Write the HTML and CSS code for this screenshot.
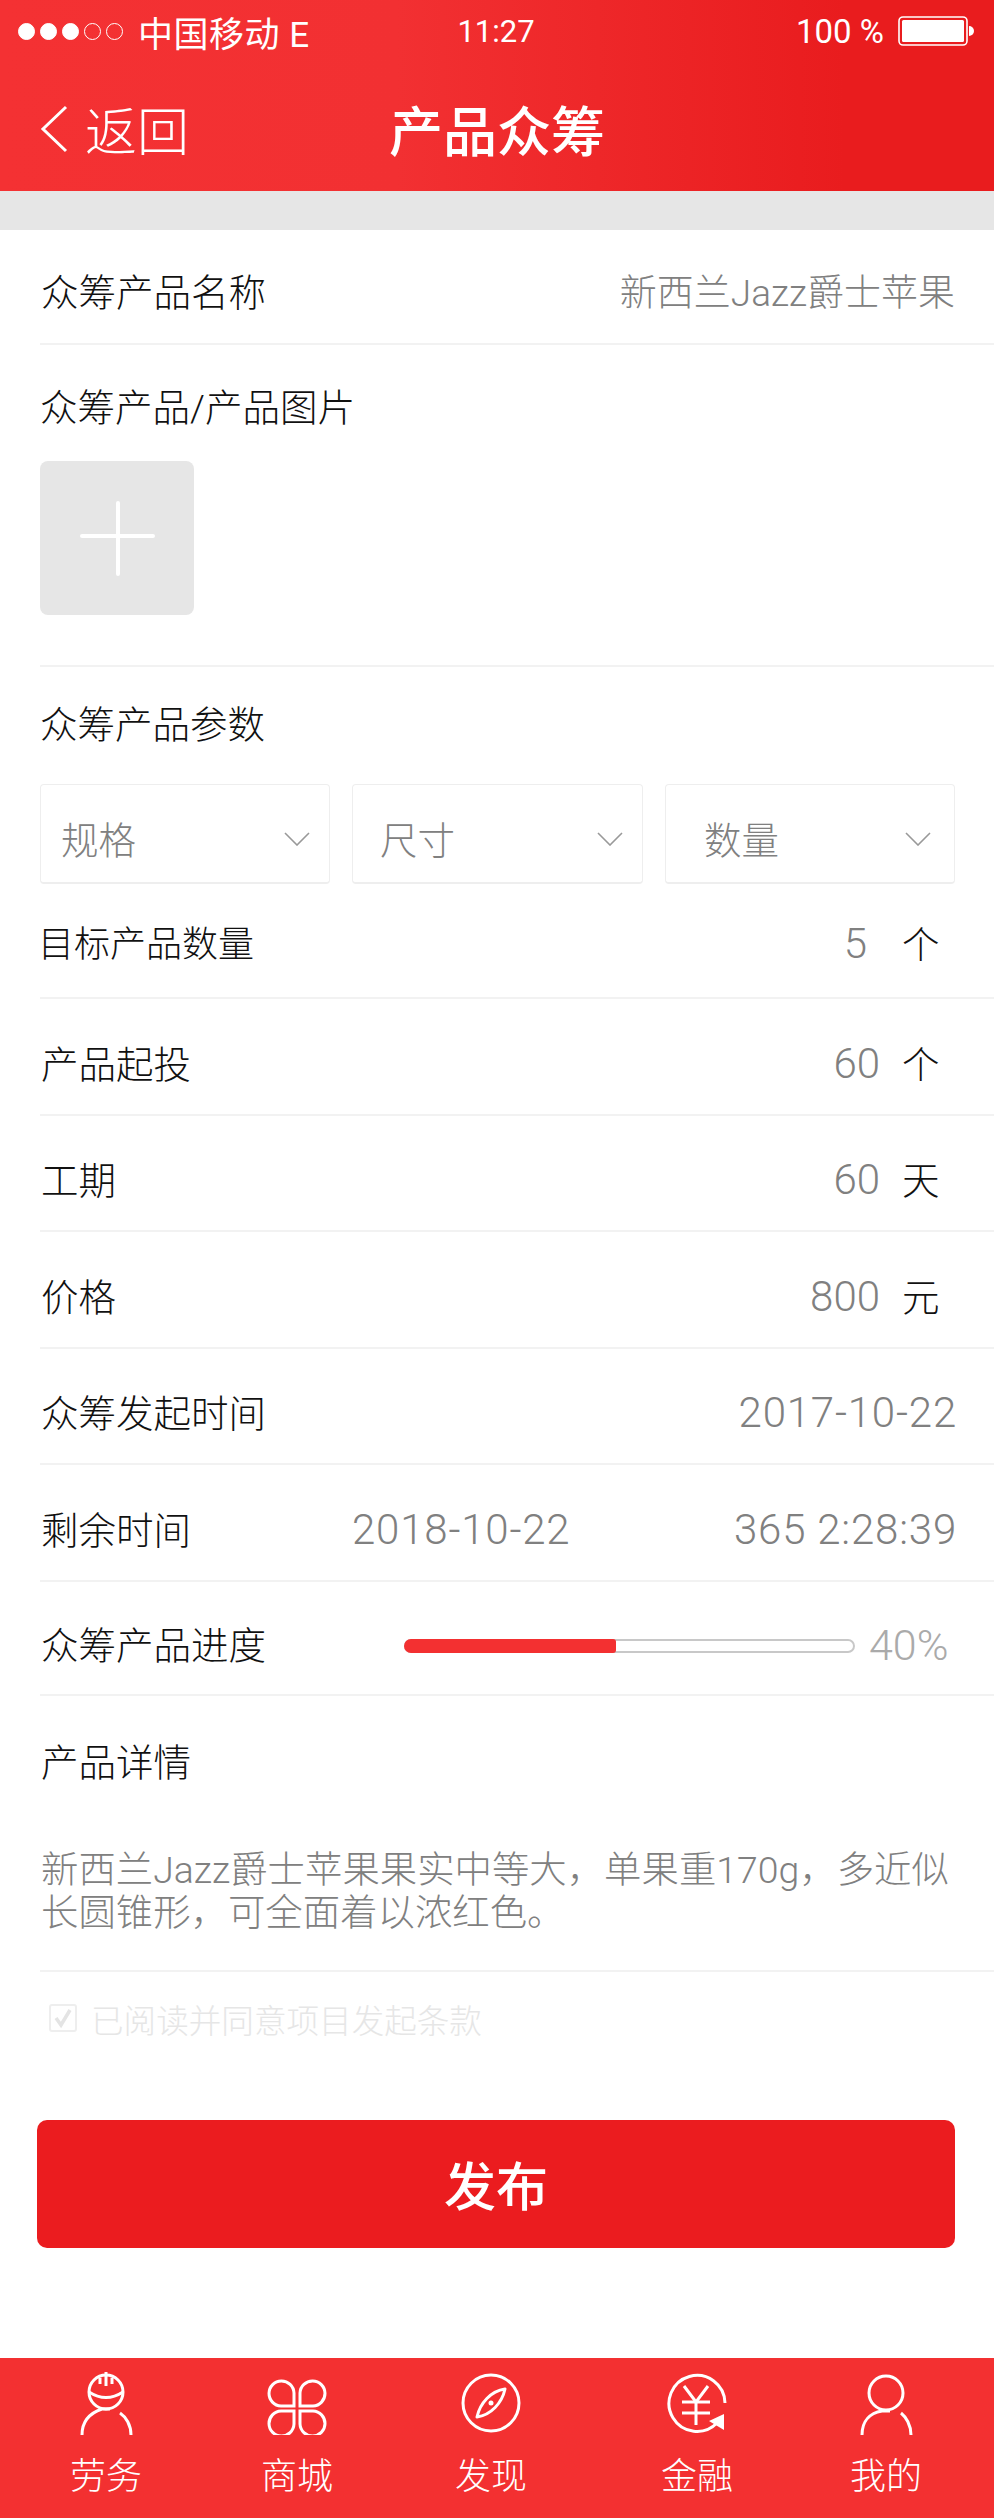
FILE: index.html
```html
<!DOCTYPE html>
<html lang="zh-CN">
<head>
    <meta charset="UTF-8">
    <meta name="viewport" content="width=device-width, initial-scale=1.0">
    <title>产品众筹</title>
    <link rel="stylesheet" href="styles.css">
</head>
<body>
    <div class="page">
        <header class="header">
            <div class="status">
                <div class="carrier">
                    <span class="signal">
                        <i class="dot on"></i><i class="dot on"></i><i class="dot on"></i><i class="dot"></i><i class="dot"></i>
                    </span>
                    <span>中国移动 E</span>
                </div>
                <div class="time">11:27</div>
                <div class="power">
                    <span>100 %</span>
                    <svg class="battery" width="76" height="30" viewBox="0 0 76 30">
                        <rect x="1" y="1" width="68" height="28" rx="4" fill="none" stroke="#fff" stroke-width="1.6"/>
                        <rect x="4" y="4" width="62" height="22" rx="1.5" fill="#fff"/>
                        <path d="M71 10a5 5 0 0 1 0 10z" fill="#fff"/>
                    </svg>
                </div>
            </div>
            <div class="nav">
                <div class="back">
                    <svg width="28" height="48" viewBox="0 0 28 48">
                        <path d="M26 2 L3 24 L26 46" fill="none" stroke="#fff" stroke-width="3"/>
                    </svg>
                    <span>返回</span>
                </div>
                <h1>产品众筹</h1>
                <div></div>
            </div>
        </header>

        <div class="gap"></div>

        <div class="row row-name">
            <span class="label">众筹产品名称</span>
            <span class="value">新西兰Jazz爵士苹果</span>
        </div>

        <div class="block block-upload">
            <div class="label">众筹产品/产品图片</div>
            <div class="upload"><i class="plus-h"></i><i class="plus-v"></i></div>
        </div>

        <div class="params">
            <div class="label">众筹产品参数</div>
            <div class="selects">
                <div class="select sel-a">
                    <span>规格</span>
                    <svg width="26" height="14" viewBox="0 0 26 14"><path d="M1 1 L13 13 L25 1" fill="none" stroke="#999" stroke-width="1.6"/></svg>
                </div>
                <div class="select sel-b">
                    <span>尺寸</span>
                    <svg width="26" height="14" viewBox="0 0 26 14"><path d="M1 1 L13 13 L25 1" fill="none" stroke="#999" stroke-width="1.6"/></svg>
                </div>
                <div class="select sel-c">
                    <span>数量</span>
                    <svg width="26" height="14" viewBox="0 0 26 14"><path d="M1 1 L13 13 L25 1" fill="none" stroke="#999" stroke-width="1.6"/></svg>
                </div>
            </div>
        </div>

        <div class="row row-first">
            <span class="label label-flush">目标产品数量</span>
            <span class="num num-single">5</span><span class="unit">个</span>
        </div>
        <div class="row">
            <span class="label">产品起投</span>
            <span class="num">60</span><span class="unit">个</span>
        </div>
        <div class="row">
            <span class="label">工期</span>
            <span class="num">60</span><span class="unit">天</span>
        </div>
        <div class="row">
            <span class="label">价格</span>
            <span class="num">800</span><span class="unit">元</span>
        </div>
        <div class="row">
            <span class="label">众筹发起时间</span>
            <span class="num num-end">2017-10-22</span>
        </div>
        <div class="row">
            <span class="label label-wide">剩余时间</span>
            <span class="date">2018-10-22</span>
            <span class="num num-end">365 2:28:39</span>
        </div>
        <div class="row row-short">
            <span class="label label-wide">众筹产品进度</span>
            <div class="track"><div class="fill" style="width: 47.500%"></div></div>
            <span class="percent">40%</span>
        </div>

        <div class="details">
            <div class="label">产品详情</div>
            <p>新西兰Jazz爵士苹果果实中等大，单果重170g，多近似<br>长圆锥形，可全面着以浓红色。</p>
        </div>

        <div class="agree">
            <svg width="28" height="28" viewBox="0 0 28 28">
                <rect x="1" y="1" width="26" height="26" rx="2" fill="none" stroke="#eee" stroke-width="2"/>
                <path d="M7 14 L12 21 L21 6" fill="none" stroke="#e4e4e4" stroke-width="3.5"/>
            </svg>
            <span>已阅读并同意项目发起条款</span>
        </div>

        <div class="submit">发布</div>

        <nav class="tabs">
            <div class="tab">
                <svg width="60" height="64" viewBox="0 0 60 64">
                    <g fill="none" stroke="#fff" stroke-width="3">
                        <circle cx="30" cy="21" r="17"/>
                        <path d="M13 21 Q30 32 47 21"/>
                        <path d="M30 1 V15 M24 7 V13 M36 7 V13"/>
                        <path d="M6 64 C6 50 14 42 26 38 H34"/>
                        <path d="M44 42 C50 46 55 54 55 64"/>
                    </g>
                </svg>
                <span>劳务</span>
            </div>
            <div class="tab">
                <svg width="60" height="64" viewBox="0 0 60 64">
                    <g fill="none" stroke="#fff" stroke-width="3">
                        <path d="M27 35 H14 A12.500 12.500 0 1 1 27 22 Z"/>
                        <path d="M33 35 H46 A12.500 12.500 0 1 0 33 22 Z"/>
                        <path d="M27 40 H14 A12.500 12.500 0 1 0 27 53 Z"/>
                        <path d="M33 40 H46 A12.500 12.500 0 1 1 33 53 Z"/>
                    </g>
                </svg>
                <span>商城</span>
            </div>
            <div class="tab">
                <svg width="60" height="64" viewBox="0 0 60 64">
                    <circle cx="30" cy="32" r="28" fill="none" stroke="#fff" stroke-width="3"/>
                    <path d="M44 18 C30 20 19 32 16 46 C30 44 41 32 44 18 Z" fill="none" stroke="#fff" stroke-width="3" stroke-linejoin="round"/>
                    <circle cx="30" cy="32" r="2.500" fill="#fff"/>
                </svg>
                <span>发现</span>
            </div>
            <div class="tab">
                <svg width="60" height="64" viewBox="0 0 60 64">
                    <g fill="none" stroke="#fff" stroke-width="3">
                        <path d="M58 32 A28 28 0 1 0 50 52"/>
                        <path d="M17 15 L29 31 L41 15"/>
                        <path d="M15 31 H43 M15 42 H43 M29 31 V54"/>
                    </g>
                    <path d="M42 50 L57 43 L57 59 Z" fill="#fff"/>
                </svg>
                <span>金融</span>
            </div>
            <div class="tab">
                <svg width="60" height="64" viewBox="0 0 60 64">
                    <g fill="none" stroke="#fff" stroke-width="3">
                        <circle cx="30" cy="22" r="17"/>
                        <path d="M6 64 C6 50 14 42 26 40 H34"/>
                        <path d="M45 42 C50 46 55 54 55 64"/>
                    </g>
                </svg>
                <span>我的</span>
            </div>
        </nav>
    </div>
</body>
</html>
```

FILE: styles.css
```css
* {
    box-sizing: border-box;
}
body {
    margin: 0;
    background: #fff;
    font-family: Roboto, "Noto Sans CJK SC", sans-serif;
    font-weight: 300;
    color: #111;
}
.page {
    width: 994px;
    height: 2518px;
    display: flex;
    flex-direction: column;
    overflow: hidden;
}

/* header */
.header {
    height: 191px;
    background: linear-gradient(90deg, #f43133 0%, #f23032 40%, #e91c1e 85%);
    color: #fff;
}
.status {
    height: 62px;
    display: grid;
    grid-template-columns: 1fr auto 1fr;
    align-items: center;
    padding: 0 20px 0 18px;
    font-size: 33px;
}
.carrier {
    display: flex;
    align-items: center;
    gap: 15px;
    font-size: 35px;
    font-weight: 400;
    letter-spacing: 0.5px;
}
.signal {
    display: flex;
    gap: 5px;
}
.dot {
    width: 17px;
    height: 17px;
    border-radius: 50%;
    border: 1.5px solid #fff;
}
.dot.on {
    background: #fff;
}
.time {
    font-size: 31px;
    font-weight: 400;
}
.power {
    display: flex;
    justify-content: flex-end;
    align-items: center;
    gap: 14px;
    font-size: 33px;
    font-weight: 400;
}
.nav {
    height: 129px;
    display: grid;
    grid-template-columns: 1fr auto 1fr;
    align-items: center;
    padding: 4px 40px 0 40px;
}
.back {
    display: flex;
    align-items: center;
    gap: 17px;
    font-size: 52px;
}
.nav h1 {
    margin: 0;
    font-size: 54px;
    font-weight: 500;
}
.gap {
    height: 39px;
    background: #e6e6e6;
}

/* form rows */
.label {
    font-size: 37.500px;
    color: #111;
}
.label-flush {
    margin-left: -3px;
    font-size: 36px;
}
.label-wide {
    width: 364px;
    flex-shrink: 0;
}
.row {
    height: 116.500px;
    margin-left: 40px;
    padding: 10px 39px 0 1px;
    display: flex;
    align-items: center;
    border-bottom: 2px solid #f2f2f2;
}
.row-name {
    height: 115px;
    padding-top: 6px;
}
.row-first {
    height: 116px;
    padding-top: 2px;
}
.row-short {
    height: 114px;
    padding-top: 10px;
}
.value {
    margin-left: auto;
    font-size: 37px;
    color: #808080;
}
.num {
    margin-left: auto;
    margin-top: 4px;
    font-size: 42px;
    color: #808080;
}
.num-single {
    margin-right: 13px;
}
.num-end {
    margin-right: -2px;
    letter-spacing: 0.800px;
}
.unit {
    width: 53px;
    margin-right: 22px;
    padding-left: 22px;
    font-size: 37.500px;
    color: #111;
    flex-shrink: 0;
}
.date {
    margin-left: -53px;
    margin-top: 4px;
    font-size: 42px;
    color: #808080;
    letter-spacing: 0.800px;
    white-space: nowrap;
}
.block-upload {
    height: 322px;
    margin-left: 40px;
    padding-top: 32px;
    border-bottom: 2px solid #f2f2f2;
}
.upload {
    width: 154px;
    height: 154px;
    margin-top: 29px;
    background: #e6e6e6;
    border-radius: 8px;
    position: relative;
}
.plus-h,
.plus-v {
    position: absolute;
    background: #fff;
    border-radius: 2px;
}
.plus-h {
    left: 40px;
    top: 73px;
    width: 75px;
    height: 4px;
}
.plus-v {
    left: 76px;
    top: 40px;
    width: 4px;
    height: 75px;
}
.params {
    height: 216px;
    padding: 27px 39px 0 40px;
}
.selects {
    display: grid;
    grid-template-columns: 290px 291px 290px;
    gap: 22px;
    margin-top: 35px;
}
.select {
    height: 100px;
    display: flex;
    align-items: center;
    justify-content: space-between;
    border: 1px solid #eee;
    border-bottom: 2px solid #eee;
    border-radius: 4px;
    padding: 8px 19px 0 20px;
    font-size: 37.500px;
    color: #808080;
}
.select svg {
    margin-top: 2px;
}
.sel-b {
    padding-left: 27px;
}
.sel-c {
    padding: 8px 23px 0 38px;
}
.track {
    width: 451px;
    height: 14px;
    margin-top: 6px;
    margin-left: -1px;
    border: 2px solid #c8c8c8;
    border-radius: 7px;
    background: #fff;
    overflow: visible;
}
.fill {
    height: 14px;
    margin: -2px 0 0 -2px;
    background: #f33031;
    border-radius: 7px 3px 3px 7px;
}
.percent {
    margin-left: 14px;
    margin-top: 4px;
    font-size: 43px;
    color: #aaa;
}
.details {
    height: 276px;
    margin-left: 40px;
    padding: 36px 0 0 1px;
    border-bottom: 2px solid #f2f2f2;
}
.details p {
    margin: 62px 0 0;
    font-size: 37.400px;
    line-height: 43px;
    color: #808080;
}
.agree {
    height: 97px;
    padding: 0 0 4px 49px;
    display: flex;
    align-items: center;
    gap: 14px;
    font-size: 32.600px;
    color: #e6e6e6;
}
.submit {
    width: 918px;
    height: 128px;
    margin: 51px 0 0 37px;
    display: flex;
    align-items: center;
    justify-content: center;
    background: #eb1c1f;
    border-radius: 10px;
    color: #fff;
    font-size: 52px;
    font-weight: 500;
}

/* bottom tabs */
.tabs {
    margin-top: auto;
    height: 160px;
    display: grid;
    grid-template-columns: 212px 170px 218px 194px 184px;
    background: #f33031;
    color: #fff;
}
.tab {
    display: flex;
    flex-direction: column;
    align-items: center;
    padding-top: 13px;
    font-size: 36px;
    line-height: 50px;
}
.tab svg {
    height: 64px;
    margin-bottom: 17px;
}
```
